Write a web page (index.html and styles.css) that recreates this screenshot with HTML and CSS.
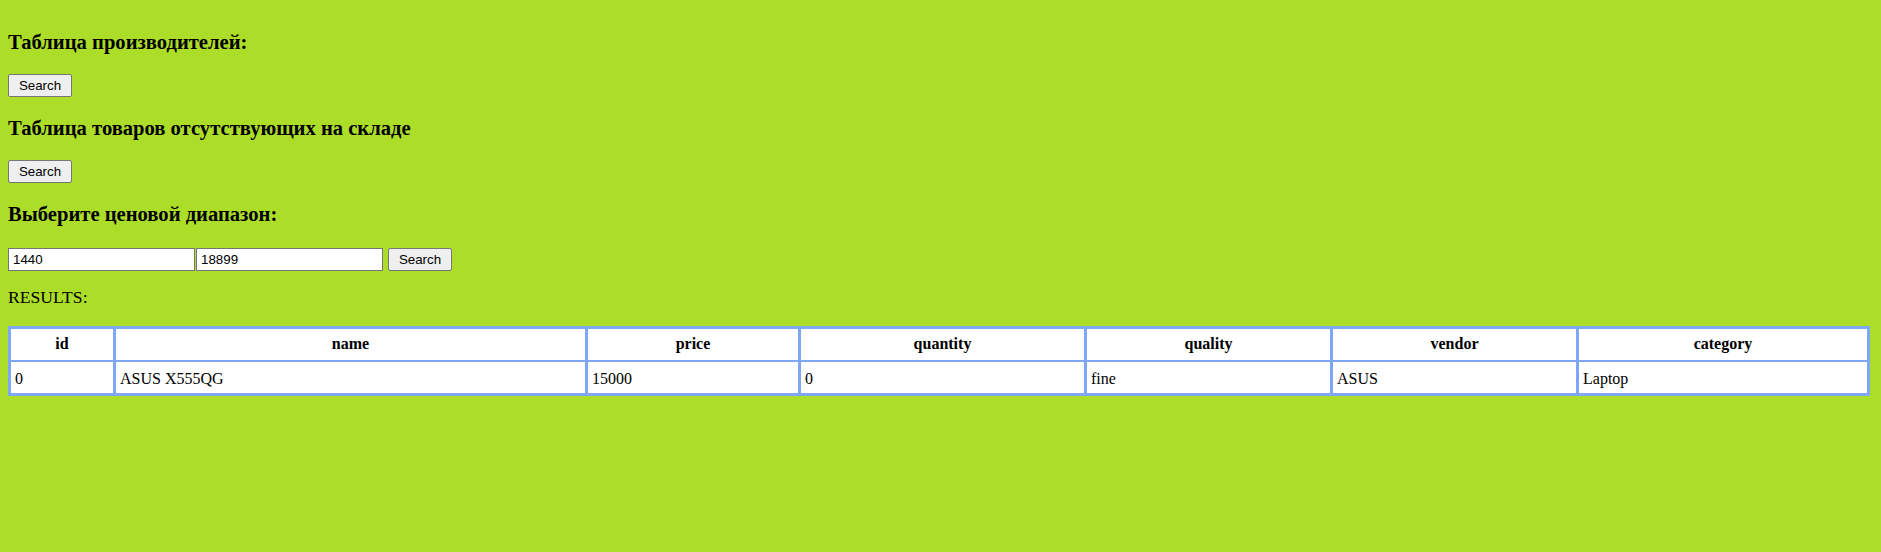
FILE: index.html
```html
<!DOCTYPE html>
<html lang="ru">
<head>
<meta charset="utf-8">
<title>Склад</title>
<link rel="stylesheet" href="styles.css">
</head>
<body>
<main class="page">
  <h3 class="title">Таблица производителей:</h3>
  <form class="row"><button type="button" class="btn">Search</button></form>

  <h3 class="title">Таблица товаров отсутствующих на складе</h3>
  <form class="row"><button type="button" class="btn">Search</button></form>

  <h3 class="title">Выберите ценовой диапазон:</h3>
  <form class="row row-range"><input class="field" type="text" value="1440"><input class="field" type="text" value="18899"><button type="button" class="btn btn-gap">Search</button></form>

  <p class="results">RESULTS:</p>

  <table class="grid">
    <colgroup>
      <col class="c-id"><col class="c-name"><col class="c-price"><col class="c-qty"><col class="c-quality"><col class="c-vendor"><col class="c-cat">
    </colgroup>
    <thead>
      <tr><th>id</th><th>name</th><th>price</th><th>quantity</th><th>quality</th><th>vendor</th><th>category</th></tr>
    </thead>
    <tbody>
      <tr><td>0</td><td>ASUS X555QG</td><td>15000</td><td>0</td><td>fine</td><td>ASUS</td><td>Laptop</td></tr>
    </tbody>
  </table>
</main>
</body>
</html>
```

FILE: styles.css
```css
html, body {
  margin: 0;
  padding: 0;
  background: #acdd28;
}

body {
  font-family: "Liberation Serif", "Times New Roman", serif;
  font-size: 16px;
  color: #000;
}

.page {
  padding: 12px 8px 8px 8px;
}

.title {
  font-size: 20.6px;
  font-weight: bold;
  line-height: 21px;
  margin: 20px 0 21px;
}

.row {
  display: flex;
  align-items: flex-start;
  height: 24px;
  margin: 0;
}

.row-range {
  margin-top: 23px;
  height: 23px;
}

.btn {
  box-sizing: border-box;
  width: 64px;
  height: 23px;
  padding: 0;
  font-family: "Liberation Sans", Arial, sans-serif;
  font-size: 13.33px;
  color: #000;
  background: #efefef;
  border: 1px solid #767676;
  border-radius: 2px;
}

.btn-gap {
  margin-left: 4px;
}

.field {
  box-sizing: border-box;
  width: 187px;
  height: 23px;
  margin: 0 1px 0 0;
  padding: 1px 4px;
  font-family: "Liberation Sans", Arial, sans-serif;
  font-size: 13.33px;
  color: #000;
  background: #fff;
  border: 1px solid #767676;
  border-radius: 0;
}

.results {
  font-size: 17.6px;
  margin: 16px 0 19px;
  line-height: 20px;
}

.grid {
  width: 1859px;
  border-collapse: collapse;
  table-layout: fixed;
  background: #fff;
  border: 3px solid #7fa7f7;
}

.grid th,
.grid td {
  border: 2px solid #7fa7f7;
  border-left-width: 3px;
  border-right-width: 3px;
  padding: 6px 4px;
  line-height: 18px;
}

.grid th {
  font-weight: bold;
  text-align: center;
  padding-top: 6px;
  padding-bottom: 7px;
}

.grid td {
  text-align: left;
  padding-top: 8px;
  padding-bottom: 5px;
}

.c-id { width: 105px; }
.c-name { width: 472px; }
.c-price { width: 213px; }
.c-qty { width: 286px; }
.c-quality { width: 246px; }
.c-vendor { width: 246px; }
.c-cat { width: 291px; }
```
